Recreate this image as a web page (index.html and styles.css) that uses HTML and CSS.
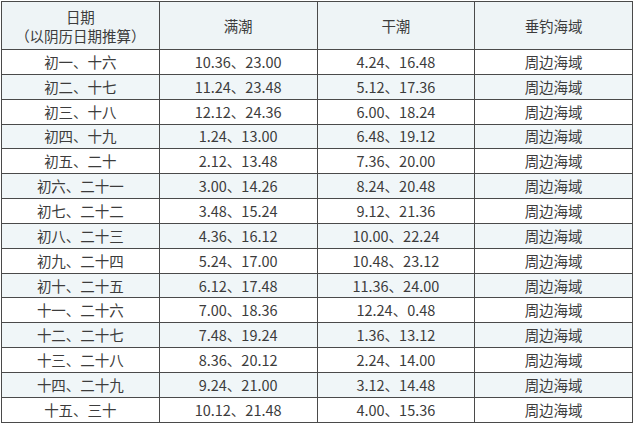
FILE: index.html
```html
<!DOCTYPE html>
<html lang="zh">
<head>
<meta charset="utf-8">
<link rel="stylesheet" href="styles.css">
</head>
<body>
<table class="tide">
  <colgroup><col class="c"><col class="c"><col class="c"><col class="c"></colgroup>
  <thead>
    <tr class="head">
      <th><div class="l1">日期</div><div class="l2">（以阴历日期推算）</div></th>
      <th>满潮</th>
      <th>干潮</th>
      <th>垂钓海域</th>
    </tr>
  </thead>
  <tbody>
    <tr><td>初一、十六</td><td>10.36、23.00</td><td>4.24、16.48</td><td>周边海域</td></tr>
    <tr><td>初二、十七</td><td>11.24、23.48</td><td>5.12、17.36</td><td>周边海域</td></tr>
    <tr><td>初三、十八</td><td>12.12、24.36</td><td>6.00、18.24</td><td>周边海域</td></tr>
    <tr><td>初四、十九</td><td>1.24、13.00</td><td>6.48、19.12</td><td>周边海域</td></tr>
    <tr><td>初五、二十</td><td>2.12、13.48</td><td>7.36、20.00</td><td>周边海域</td></tr>
    <tr><td>初六、二十一</td><td>3.00、14.26</td><td>8.24、20.48</td><td>周边海域</td></tr>
    <tr><td>初七、二十二</td><td>3.48、15.24</td><td>9.12、21.36</td><td>周边海域</td></tr>
    <tr><td>初八、二十三</td><td>4.36、16.12</td><td>10.00、22.24</td><td>周边海域</td></tr>
    <tr><td>初九、二十四</td><td>5.24、17.00</td><td>10.48、23.12</td><td>周边海域</td></tr>
    <tr><td>初十、二十五</td><td>6.12、17.48</td><td>11.36、24.00</td><td>周边海域</td></tr>
    <tr><td>十一、二十六</td><td>7.00、18.36</td><td>12.24、0.48</td><td>周边海域</td></tr>
    <tr><td>十二、二十七</td><td>7.48、19.24</td><td>1.36、13.12</td><td>周边海域</td></tr>
    <tr><td>十三、二十八</td><td>8.36、20.12</td><td>2.24、14.00</td><td>周边海域</td></tr>
    <tr><td>十四、二十九</td><td>9.24、21.00</td><td>3.12、14.48</td><td>周边海域</td></tr>
    <tr><td>十五、三十</td><td>10.12、21.48</td><td>4.00、15.36</td><td>周边海域</td></tr>
  </tbody>
</table>
</body>
</html>
```
FILE: styles.css
```css
html, body {
  margin: 0;
  padding: 0;
  background: #ffffff;
}
body {
  padding: 1px 0 0 1px;
  font-family: "Noto Sans CJK SC", "Noto Sans", sans-serif;
  color: #3c3c3c;
}
.tide {
  width: 632px;
  border-collapse: collapse;
  table-layout: fixed;
  font-size: 14.5px;
}
.tide .c {
  width: 25%;
}
.tide th,
.tide td {
  border: 1px solid #4a4a4a;
  text-align: center;
  vertical-align: middle;
  padding: 0;
  font-weight: 400;
}
.tide .head th {
  height: 47px;
  line-height: 19px;
  background: #eef4f6;
}
.tide td {
  height: 23.85px;
  line-height: 20px;
}
.tide tbody tr:nth-child(even) td {
  background: #f0f6f8;
}
```
